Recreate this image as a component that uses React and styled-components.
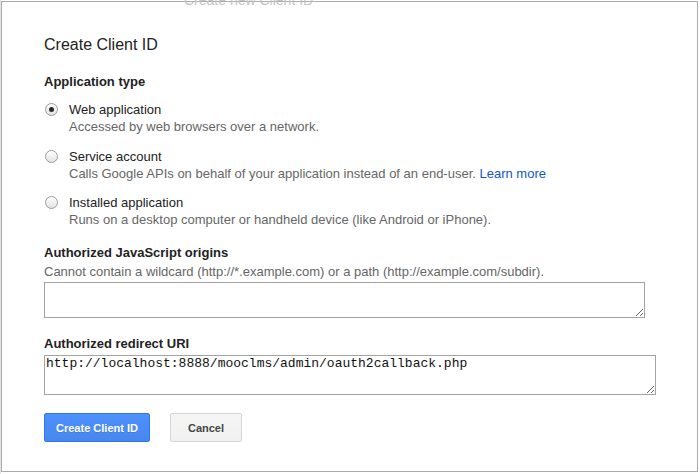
import React from "react";
import styled, { createGlobalStyle } from "styled-components";

const GlobalStyle = createGlobalStyle`
  html, body {
    margin: 0;
    padding: 0;
    background: #ffffff;
  }
  body {
    font-family: "Liberation Sans", Arial, sans-serif;
    color: #222;
  }
  * { box-sizing: border-box; }
`;

const Page = styled.div`
  width: 700px;
  height: 474px;
  padding: 1px 2px 2px 1px;
  background: linear-gradient(to right, #e4e4e4 0, #e4e4e4 1px, #fff 1px);
  overflow: hidden;
`;

const Dialog = styled.div`
  position: relative;
  width: 697px;
  height: 471px;
  border: 1px solid #ababab;
  background: #fff;
  padding: 33px 42px 0 42px;
  display: flex;
  flex-direction: column;
  align-items: flex-start;
`;

const GhostText = styled.div`
  position: absolute;
  top: -9px;
  left: 182px;
  font-size: 14px;
  line-height: 14px;
  color: #c4c4c4;
  white-space: nowrap;
  pointer-events: none;
`;

const Title = styled.h1`
  margin: 0;
  font-size: 16px;
  line-height: 20px;
  font-weight: normal;
  color: #222;
`;

const SectionLabel = styled.div`
  margin-top: ${(p) => p.$top}px;
  font-size: 13px;
  line-height: 16px;
  font-weight: bold;
  color: #222;
`;

const HelpText = styled.div`
  margin-top: 2px;
  font-size: 13px;
  line-height: 17px;
  color: #666;
`;

const RadioList = styled.div`
  margin-top: 11px;
  display: flex;
  flex-direction: column;
  gap: 12px;
`;

const RadioItem = styled.label`
  display: grid;
  grid-template-columns: 13px 1fr;
  column-gap: 11px;
  padding-left: 1px;
  &:first-child {
    margin-bottom: 1px;
  }
`;

const RadioCircle = styled.span`
  margin-top: 2px;
  width: 13px;
  height: 13px;
  border-radius: 50%;
  border: 1px solid #9c9c9c;
  background: linear-gradient(#ffffff, #e2e2e2);
  box-shadow: inset 0 1px 1px rgba(255, 255, 255, 0.8);
  display: flex;
  align-items: center;
  justify-content: center;
  &::after {
    content: "";
    display: ${(p) => (p.$checked ? "block" : "none")};
    width: 5px;
    height: 5px;
    border-radius: 50%;
    background: #2a2a2a;
  }
`;

const ItemText = styled.div`
  display: flex;
  flex-direction: column;
`;

const ItemTitle = styled.span`
  font-size: 13px;
  line-height: 17px;
  color: #222;
`;

const ItemDesc = styled.span`
  font-size: 13px;
  line-height: 17px;
  color: #666;
`;

const Link = styled.a`
  color: #1155cc;
  text-decoration: none;
`;

const TextArea = styled.textarea`
  display: block;
  margin-top: ${(p) => p.$top}px;
  width: ${(p) => p.$w}px;
  height: ${(p) => p.$h}px;
  border: 1px solid #a3a3a3;
  border-radius: 0;
  padding: 0 1px;
  font-family: "Liberation Mono", "Courier New", monospace;
  font-size: 13px;
  line-height: 15px;
  color: #111;
  background: #fff;
  outline: none;
`;

const ButtonRow = styled.div`
  margin-top: 18px;
  display: flex;
  gap: 20px;
`;

const Button = styled.button`
  width: ${(p) => p.$w}px;
  height: 29px;
  padding: 0;
  border-radius: 2px;
  font-family: "Liberation Sans", Arial, sans-serif;
  font-size: 11px;
  font-weight: bold;
  cursor: pointer;
  border: 1px solid ${(p) => (p.$primary ? "#3079ed" : "#d6d6d6")};
  background: ${(p) =>
    p.$primary
      ? "linear-gradient(#4d90fe, #4787ed)"
      : "linear-gradient(#f5f5f5, #f1f1f1)"};
  color: ${(p) => (p.$primary ? "#ffffff" : "#444444")};
  text-shadow: ${(p) => (p.$primary ? "0 1px rgba(0,0,0,0.1)" : "none")};
`;

const options = [
  {
    title: "Web application",
    desc: "Accessed by web browsers over a network.",
    checked: true,
  },
  {
    title: "Service account",
    desc: "Calls Google APIs on behalf of your application instead of an end-user.",
    link: "Learn more",
  },
  {
    title: "Installed application",
    desc: "Runs on a desktop computer or handheld device (like Android or iPhone).",
  },
];

export default function App() {
  return (
    <>
      <GlobalStyle />
      <Page>
        <Dialog>
          <GhostText>Create new Client ID</GhostText>
          <Title>Create Client ID</Title>

          <SectionLabel $top={19}>Application type</SectionLabel>
          <RadioList>
            {options.map((o) => (
              <RadioItem key={o.title}>
                <RadioCircle $checked={o.checked} />
                <ItemText>
                  <ItemTitle>{o.title}</ItemTitle>
                  <ItemDesc>
                    {o.desc}
                    {o.link && (
                      <>
                        {" "}
                        <Link href="#">{o.link}</Link>
                      </>
                    )}
                  </ItemDesc>
                </ItemText>
              </RadioItem>
            ))}
          </RadioList>

          <SectionLabel $top={17}>Authorized JavaScript origins</SectionLabel>
          <HelpText>
            Cannot contain a wildcard (http://*.example.com) or a path
            (http://example.com/subdir).
          </HelpText>
          <TextArea $top={2} $w={601} $h={36} defaultValue="" />

          <SectionLabel $top={18}>Authorized redirect URI</SectionLabel>
          <TextArea
            $top={3}
            $w={612}
            $h={40}
            defaultValue="http://localhost:8888/mooclms/admin/oauth2callback.php"
          />

          <ButtonRow>
            <Button $primary $w={106}>Create Client ID</Button>
            <Button $w={72}>Cancel</Button>
          </ButtonRow>
        </Dialog>
      </Page>
    </>
  );
}
